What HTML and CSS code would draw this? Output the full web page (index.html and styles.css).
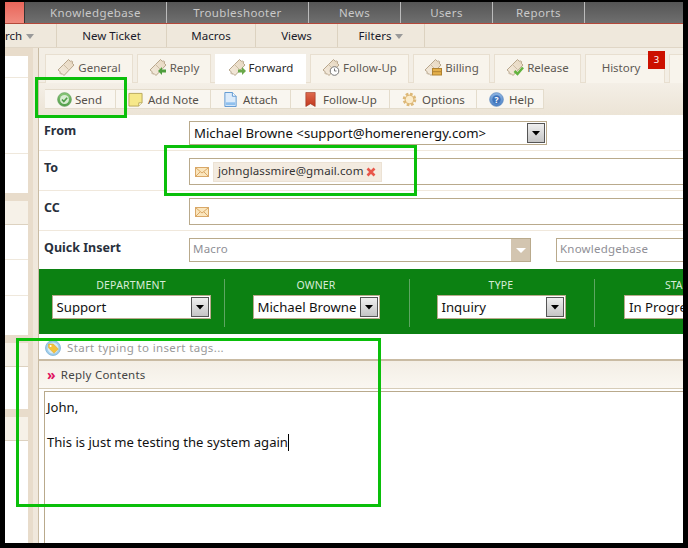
FILE: index.html
```html
<!DOCTYPE html>
<html lang="en">
<head>
<meta charset="utf-8">
<title>Forward ticket</title>
<link rel="stylesheet" href="styles.css">
</head>
<body>
<svg class="defs" width="0" height="0" aria-hidden="true">
  <defs>
    <linearGradient id="tk" x1="0" y1="1" x2="1" y2="0"><stop offset="0" stop-color="#f5ecdf"/><stop offset="1" stop-color="#e6d6be"/></linearGradient>
    <linearGradient id="cb" x1="0" y1="0" x2="0" y2="1"><stop offset="0" stop-color="#f0f0f0"/><stop offset="1" stop-color="#c4c4c4"/></linearGradient>
    <linearGradient id="gb" x1="0" y1="0" x2="0" y2="1"><stop offset="0" stop-color="#8cc97a"/><stop offset="1" stop-color="#4f9e48"/></linearGradient>
    <linearGradient id="bb" x1="0" y1="0" x2="0" y2="1"><stop offset="0" stop-color="#8fb6e4"/><stop offset="1" stop-color="#4a7fc4"/></linearGradient>
    <linearGradient id="rb" x1="0" y1="0" x2="0" y2="1"><stop offset="0" stop-color="#de6a4e"/><stop offset="1" stop-color="#c2381f"/></linearGradient>
    <symbol id="ticket" viewBox="0 0 18 18"><path d="M1 12 11.500 1.500l1.800 1.800 1.400-.4.900.9-.4 1.400 1.800 1.800L7 17.500l-1.800-1.800-1.400.4-.9-.9.4-1.400z" fill="url(#tk)" stroke="#b8a68c"/><path d="M6.500 6.500l5 5" stroke="#cdbda4" fill="none"/></symbol>
    <symbol id="caret" viewBox="0 0 18 20" preserveAspectRatio="none"><rect x=".5" y=".5" width="17" height="19" fill="url(#cb)" stroke="#555"/><path d="M5 8h8l-4 4.500z" fill="#000"/></symbol>
    <symbol id="mail" viewBox="0 0 14 10"><rect x=".5" y=".5" width="13" height="9" fill="#fbe6bd" stroke="#d9a868"/><path d="M1 1l6 5 6-5M1 9l4-4M13 9L9 5" fill="none" stroke="#d9a868"/></symbol>
  </defs>
</svg>
<div class="frame">
  <nav class="nav">
    <a class="nav-first"></a>
    <a class="nav-item w142">Knowledgebase</a>
    <a class="nav-item w142">Troubleshooter</a>
    <a class="nav-item w92">News</a>
    <a class="nav-item w92">Users</a>
    <a class="nav-item w92">Reports</a>
  </nav>
  <nav class="subnav">
    <a class="sub-item s52 clip"><span class="clip-text">rch</span><i class="down"></i></a>
    <a class="sub-item s110">New Ticket</a>
    <a class="sub-item s89">Macros</a>
    <a class="sub-item s82">Views</a>
    <a class="sub-item s87">Filters<i class="down"></i></a>
  </nav>
  <div class="body">
    <aside class="side">
      <section class="panel p1"><div class="srow r1"></div><div class="srow r2"></div><div class="srow r3"></div></section>
      <section class="panel p2"><div class="shead"></div><div class="srow r4"></div><div class="srow r5"></div><div class="srow r6"></div></section>
      <section class="panel p3"><div class="shead"></div><div class="srow r7"></div></section>
      <section class="panel p4"><div class="shead"></div></section>
    </aside>
    <div class="gutter"></div>
    <main class="main">
      <div class="tabs">
        <a class="tab t88"><svg class="tic"><use href="#ticket"/></svg>General</a>
        <a class="tab t74"><svg class="tic" viewBox="0 0 18 18"><use href="#ticket" width="18" height="18"/><path d="M9 13l4-4v2.500h4v3h-4V17z" fill="#4f9e3e"/></svg>Reply</a>
        <a class="tab t91 on"><svg class="tic" viewBox="0 0 18 18"><use href="#ticket" width="18" height="18"/><path d="M18 13l-4-4v2.500h-4v3h4V17z" fill="#6aa84a"/></svg>Forward</a>
        <a class="tab t99"><svg class="tic" viewBox="0 0 18 18"><use href="#ticket" width="18" height="18"/><circle cx="12.500" cy="13" r="4.300" fill="#fff" stroke="#777"/><path d="M12.500 10.500V13h2" fill="none" stroke="#777"/></svg>Follow-Up</a>
        <a class="tab t77"><svg class="tic" viewBox="0 0 18 18"><use href="#ticket" width="18" height="18"/><rect x="8.500" y="10.500" width="9" height="6.500" fill="#e5b04a" stroke="#b08230"/><path d="M9 13.700h8" stroke="#b08230"/></svg>Billing</a>
        <a class="tab t87"><svg class="tic" viewBox="0 0 18 18"><use href="#ticket" width="18" height="18"/><path d="M8.500 13l3 3 5.500-6.500" fill="none" stroke="#63b33f" stroke-width="2.500"/></svg>Release</a>
        <a class="tab t80 hist">History<b class="badge">3</b></a>
        <a class="tab t80"></a>
      </div>
      <div class="toolbar">
        <a class="tool b71 tight"><svg class="ti" viewBox="0 0 16 16"><circle cx="8" cy="8" r="7.300" fill="url(#gb)" stroke="#5f9e58" stroke-width=".8"/><circle cx="8" cy="8" r="4.800" fill="#d8ecd2"/><path d="M5.300 8l2 2.200 3.500-4" fill="none" stroke="#4f9e48" stroke-width="1.800"/></svg>Send</a>
        <a class="tool b95"><svg class="ti" viewBox="0 0 16 16"><path d="M1 1.500h14v10l-3.500 3.500H1z" fill="#f6e88a" stroke="#b7a85a"/><path d="M11.500 15v-3.500H15" fill="#fff" stroke="#b7a85a"/></svg>Add Note</a>
        <a class="tool b80"><svg class="ti" viewBox="0 0 16 16"><path d="M2 .5h8l4 4V15.500H2z" fill="#dcebfa" stroke="#5a94d0"/><path d="M10 .5V4.500h4" fill="#fff" stroke="#5a94d0"/><rect x="3" y="11" width="10" height="3" fill="#8fc0ee"/></svg>Attach</a>
        <a class="tool b99"><svg class="ti" viewBox="0 0 16 16"><path d="M3 .5h10v15l-5-3-5 3z" fill="url(#rb)" stroke="#97301f" stroke-width=".6"/></svg>Follow-Up</a>
        <a class="tool b87"><svg class="ti" viewBox="0 0 16 16"><circle cx="8" cy="8" r="5.500" fill="#f6ddaa" stroke="#dcb878" stroke-width="3.500" stroke-dasharray="2.600 1.700"/><circle cx="8" cy="8" r="4.500" fill="#fbeccc" stroke="#d4a860" stroke-width=".7"/></svg>Options</a>
        <a class="tool b67"><svg class="ti" viewBox="0 0 16 16"><circle cx="8" cy="8" r="7.300" fill="url(#bb)" stroke="#5b88c0" stroke-width=".8"/><circle cx="8" cy="8" r="4.500" fill="#3f74bb"/><text class="qm" x="8" y="11.500">?</text></svg>Help</a>
      </div>
      <form class="form">
        <div class="row from">
          <label class="lbl">From</label>
          <div class="sel wfrom"><span class="sel-t">Michael Browne &lt;support@homerenergy.com&gt;</span><svg class="car"><use href="#caret" width="18" height="20"/></svg></div>
        </div>
        <div class="row to">
          <label class="lbl">To</label>
          <div class="addr"><svg class="mail"><use href="#mail"/></svg><span class="chip">johnglassmire@gmail.com<svg class="x" viewBox="0 0 10 10"><path d="M1.500 1.500l7 7M8.500 1.500l-7 7" stroke="#e8564a" stroke-width="2.600"/></svg></span></div>
        </div>
        <div class="row cc">
          <label class="lbl">CC</label>
          <div class="addr"><svg class="mail"><use href="#mail"/></svg></div>
        </div>
        <div class="row qi">
          <label class="lbl">Quick Insert</label>
          <div class="combo"><span class="ph">Macro</span><span class="combo-b"><i class="cdown"></i></span></div>
          <div class="kb"><span class="ph">Knowledgebase</span></div>
        </div>
      </form>
      <div class="props">
        <div class="prop"><div class="plab">DEPARTMENT</div><div class="sel wdep"><span class="sel-t">Support</span><svg class="car"><use href="#caret" width="18" height="20"/></svg></div></div>
        <div class="prop"><div class="plab">OWNER</div><div class="sel wown"><span class="sel-t">Michael Browne</span><svg class="car"><use href="#caret" width="18" height="20"/></svg></div></div>
        <div class="prop"><div class="plab">TYPE</div><div class="sel wtyp"><span class="sel-t">Inquiry</span><svg class="car"><use href="#caret" width="18" height="20"/></svg></div></div>
        <div class="prop last"><div class="plab">STA</div><div class="sel wsta"><span class="sel-t">In Progre</span></div></div>
      </div>
      <div class="tags"><svg class="tagi" viewBox="0 0 16 16"><circle cx="8" cy="8" r="7.500" fill="#9fcdea" stroke="#7fb4d8" stroke-width=".8"/><circle cx="8" cy="8" r="5.500" fill="#d8ecf8"/><path d="M3.500 4h4.800l5 5-4.300 4.300-5.500-5.500z" fill="#f4c23c" stroke="#d6a02a" stroke-width=".5"/><circle cx="5.600" cy="6" r="1" fill="#fff"/></svg><span class="tag-ph">Start typing to insert tags...</span></div>
      <div class="rhead"><span class="chev">»</span>Reply Contents</div>
      <div class="editor"><p class="ln">John,</p><p class="ln gap">This is just me testing the system again<span class="caret-bar"></span></p></div>
    </main>
  </div>
  <div class="mark m-send"></div>
  <div class="mark m-to"></div>
  <div class="mark m-tags"></div>
</div>
</body>
</html>
```
FILE: styles.css
```css
* { box-sizing: border-box; }
html, body { margin: 0; padding: 0; background: #000; }
body { height: 548px; overflow: hidden; font-family: "Noto Sans", "Open Sans", sans-serif; }
.defs { position: absolute; }
.frame { position: relative; width: 678px; height: 541px; margin: 2px 0 0 5px; background: #fff; overflow: hidden; }
.frame > .mark { position: absolute; border: 3px solid #0abf0a; }
.m-send { left: 30px; top: 75px; width: 92px; height: 41px; }
.m-to { left: 159px; top: 143px; width: 253px; height: 51px; }
.m-tags { left: 11px; top: 336px; width: 365px; height: 169px; }

.nav { display: flex; height: 22px; background: linear-gradient(#555, #6f6f6f); border-bottom: 1px solid #b4483a; }
.nav-first { width: 20px; background: linear-gradient(#e8655a, #f08a7e); border-right: 1px solid #333; }
.nav-item { display: flex; align-items: center; justify-content: center; height: 21px; color: #c9c9c9; font-size: 11.500px; letter-spacing: .4px; border-right: 1px solid #bbb; }
.w142 { width: 142px; }
.w92 { width: 92px; }

.subnav { display: flex; height: 24px; background: #efe8dc; border-bottom: 1px solid #e0d6c6; }
.sub-item { display: flex; align-items: center; justify-content: center; height: 23px; font-size: 11.500px; color: #1a1a2a; border-right: 1px solid #dcd2c0; }
.clip { justify-content: flex-start; }
.clip-text { white-space: nowrap; }
.s52 { width: 52px; }
.s110 { width: 110px; }
.s89 { width: 89px; }
.s82 { width: 82px; }
.s87 { width: 87px; }
.down { width: 0; height: 0; margin: 2px 0 0 4px; border: 4px solid transparent; border-top: 5px solid #999; border-bottom: 0; }

.body { display: flex; height: 495px; }
.side { width: 23px; background: #e8dccb; flex: none; padding-top: 8px; display: flex; flex-direction: column; gap: 8px; }
.panel { background: #fff; }
.srow { border-bottom: 1px solid #efe8dc; }
.shead { height: 24px; background: #f6f1e8; border-bottom: 1px solid #ddd2c0; }
.p1 { height: 137px; }
.r1 { height: 22px; }
.r2 { height: 76px; }
.r3 { height: 39px; border-bottom: 0; }
.p2 { height: 134px; }
.r4 { height: 35px; }
.r5 { height: 36px; }
.r6 { height: 39px; border-bottom: 0; }
.p3 { height: 66px; }
.r7 { height: 42px; border-bottom: 0; }
.p4 { flex: 1; }
.gutter { width: 11px; flex: none; background: linear-gradient(90deg, #e8dccb 0 5px, #f0e8dc 5px 10px, #c9bba3 10px); }

.main { width: 644px; flex: none; overflow: hidden; }
.tabs { display: flex; gap: 4px; height: 35px; padding: 6px 0 0 6px; background: #f3eee5; border-bottom: 1px solid #e8dfd0; }
.tab { position: relative; flex: none; display: flex; align-items: center; justify-content: center; gap: 3px; height: 29px; padding-bottom: 4px; color: #5f5a54; font-size: 11.500px; background: #f8f4ec; border: 1px solid #e8dfd0; border-bottom: 0; }
.tab.on { background: #fff; color: #2a2a2a; height: 30px; border-color: #fff; padding-bottom: 5px; }
.t88 { width: 88px; }
.t74 { width: 74px; }
.t91 { width: 91px; }
.t99 { width: 99px; }
.t77 { width: 77px; }
.t87 { width: 87px; }
.t80 { width: 80px; }
.tic { width: 18px; height: 18px; }
.hist { padding-right: 8px; }
.badge { position: absolute; left: 62px; top: -4px; width: 17px; height: 18px; background: #cc1100; color: #fff; font-size: 9.500px; font-weight: 400; text-align: center; line-height: 17px; }

.toolbar { display: flex; height: 32px; padding: 6px 0 0 6px; background: linear-gradient(#f4efe6, #ece4d6); }
.tool { flex: none; display: flex; align-items: center; gap: 5px; height: 20px; padding-left: 12px; background: #f9f6f0; border: 1px solid #e4dccc; border-left: 0; color: #555049; font-size: 11.500px; }
.tight { gap: 3px; }
.b71 { width: 71px; }
.b95 { width: 95px; }
.b80 { width: 80px; }
.b99 { width: 99px; }
.b87 { width: 87px; }
.b67 { width: 67px; }
.ti { width: 15px; height: 15px; flex: none; }
.qm { font-size: 9px; font-weight: 700; fill: #fff; text-anchor: middle; }

.row { display: flex; align-items: flex-start; padding-left: 5px; border-bottom: 1px solid #f0e8dc; }
.from { height: 36px; padding-top: 6px; }
.to { height: 40px; padding-top: 7px; }
.cc { height: 40px; padding-top: 7px; }
.qi { height: 38px; padding-top: 7px; border-bottom: 0; }
.lbl { width: 145px; flex: none; font-size: 12.500px; font-weight: 700; color: #29303c; line-height: 16px; margin-top: 2px; }

.sel { display: flex; align-items: center; justify-content: space-between; height: 24px; padding: 0 1px 0 4px; background: #fff; border: 1px solid #b9aa8c; }
.sel-t { font-size: 13.200px; color: #111; white-space: nowrap; }
.car { width: 18px; height: 20px; flex: none; }
.wfrom { width: 358px; }
.wdep { width: 159px; }
.wown { width: 127px; }
.wtyp { width: 129px; }
.wsta { width: 59px; padding-right: 0; overflow: hidden; border-right: 0; }

.addr { display: flex; align-items: center; width: 520px; flex: none; height: 27px; padding-left: 5px; border: 1px solid #b9aa8c; background: #fff; }
.mail { width: 14px; height: 10px; flex: none; }
.chip { display: inline-flex; align-items: center; height: 20px; margin-left: 4px; padding: 0 5px 2px 4px; background: #f3ebe0; border: 1px solid #ece2d4; font-size: 11.500px; color: #333; letter-spacing: .1px; white-space: nowrap; }
.x { width: 10px; height: 10px; margin: 2px 0 0 2px; }

.combo { display: flex; align-items: center; justify-content: space-between; width: 342px; height: 24px; margin-right: 25px; padding-left: 3px; flex: none; border: 1px solid #b9aa8c; }
.combo-b { display: flex; align-items: center; justify-content: center; width: 19px; height: 22px; background: #d3c5b0; }
.cdown { width: 0; height: 0; border: 5px solid transparent; border-top: 5px solid #fff; border-bottom: 0; }
.kb { width: 200px; flex: none; height: 24px; padding: 0 0 3px 3px; border: 1px solid #b9aa8c; display: flex; align-items: center; }
.combo .ph { padding-bottom: 3px; }
.ph { font-size: 11.500px; color: #8f8f96; letter-spacing: .2px; }

.props { display: flex; height: 65px; background: #0c8112; padding: 10px 0 0 1px; }
.prop { width: 185px; flex: none; height: 48px; padding-right: 2px; border-right: 1px solid #5ea662; display: flex; flex-direction: column; align-items: center; }
.prop.last { width: 88px; border-right: 0; align-items: flex-start; padding: 0 0 0 29px; }
.prop.last .plab { margin-left: 41px; white-space: nowrap; letter-spacing: 0; }
.plab { height: 16px; font-size: 10.500px; line-height: 13px; color: #d8ecd8; letter-spacing: .2px; text-align: center; }

.tags { display: flex; align-items: center; gap: 6px; height: 27px; padding: 2px 0 0 6px; background: #fff; border-bottom: 2px solid #c9bba3; }
.tagi { width: 16px; height: 16px; flex: none; }
.tag-ph { font-size: 11.500px; color: #9a9a9a; letter-spacing: .35px; }

.rhead { display: flex; align-items: center; height: 28px; padding-left: 8px; background: linear-gradient(#f3eee5, #faf7f1); border-bottom: 1px solid #d6ccb8; font-size: 11.500px; color: #444; letter-spacing: .25px; }
.chev { color: #e0115f; font-weight: 700; font-size: 14px; margin-right: 5px; line-height: 12px; }
.editor { margin: 2px -20px 0 5px; height: 160px; padding: 6px 2px; border: 1px solid #b9aa8c; border-bottom: 0; }
.ln { margin: 0; font-size: 13.080px; line-height: 18px; color: #111; }
.gap { margin-top: 17px; }
.caret-bar { display: inline-block; width: 1px; height: 17px; background: #000; vertical-align: -4px; }
```
